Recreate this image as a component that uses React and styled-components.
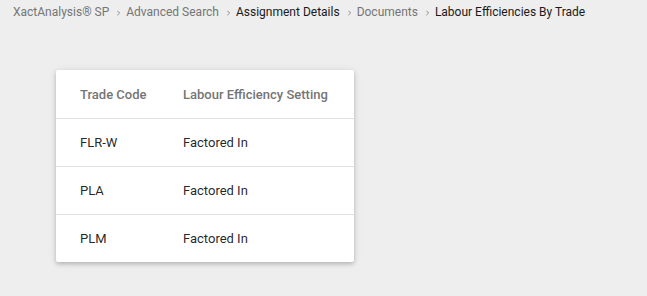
import React from "react";
import styled, { createGlobalStyle } from "styled-components";

const GlobalStyle = createGlobalStyle`
    html, body {
        margin: 0;
        padding: 0;
        background: #eeeeee;
        font-family: Roboto, "Liberation Sans", sans-serif;
    }
`;

const Page = styled.div`
    min-height: 296px;
    background: #eeeeee;
    padding: 4px 13px 0 13px;
    box-sizing: border-box;
`;

const Crumbs = styled.nav`
    display: flex;
    align-items: center;
    height: 16px;
    font-size: 12px;
    line-height: 16px;
    white-space: nowrap;
`;

const Crumb = styled.span`
    flex: none;
    color: ${(props) => (props.active ? "#1a1a1a" : "#757575")};
`;

const Chevron = styled.svg`
    width: 3px;
    height: 6px;
    margin: 1px 6px 0 8px;
    flex: none;
`;

const Card = styled.div`
    width: 298px;
    margin: 50px 0 0 43px;
    background: #fff;
    border-radius: 2px;
    box-shadow: 0 2px 4px rgba(0, 0, 0, 0.2), 0 1px 10px rgba(0, 0, 0, 0.08);
`;

const Table = styled.table`
    width: 100%;
    border-collapse: collapse;
    font-size: 13px;
`;

const HeadCell = styled.th`
    height: 48px;
    padding: 0 0 0 24px;
    text-align: left;
    font-weight: 500;
    color: #757575;
    width: ${(props) => props.width || "auto"};
    border-bottom: 1px solid #e0e0e0;
    white-space: nowrap;
`;

const Row = styled.tr`
    & + & td {
        border-top: 1px solid #e0e0e0;
    }
`;

const Cell = styled.td`
    height: 47px;
    padding: 0 0 0 24px;
    color: rgba(0, 0, 0, 0.87);
`;

const trail = [
    { label: "XactAnalysis® SP" },
    { label: "Advanced Search" },
    { label: "Assignment Details", active: true },
    { label: "Documents" },
    { label: "Labour Efficiencies By Trade", active: true },
];

const trades = [
    { code: "FLR-W", setting: "Factored In" },
    { code: "PLA", setting: "Factored In" },
    { code: "PLM", setting: "Factored In" },
];

const Breadcrumbs = () => (
    <Crumbs>
        {trail.map((item, i) => (
            <React.Fragment key={item.label}>
                {i > 0 && (
                    <Chevron viewBox="0 0 3 6">
                        <path d="M0.4 0.8 L2.6 3 L0.4 5.2" fill="none" stroke="#8a8a8a" strokeWidth="1" />
                    </Chevron>
                )}
                <Crumb active={item.active}>{item.label}</Crumb>
            </React.Fragment>
        ))}
    </Crumbs>
);

const App = () => {
    return (
        <Page>
            <GlobalStyle />
            <Breadcrumbs />
            <Card>
                <Table>
                    <thead>
                        <tr>
                            <HeadCell width="79px">Trade Code</HeadCell>
                            <HeadCell>Labour Efficiency Setting</HeadCell>
                        </tr>
                    </thead>
                    <tbody>
                        {trades.map((t) => (
                            <Row key={t.code}>
                                <Cell>{t.code}</Cell>
                                <Cell>{t.setting}</Cell>
                            </Row>
                        ))}
                    </tbody>
                </Table>
            </Card>
        </Page>
    );
};

export default App;
